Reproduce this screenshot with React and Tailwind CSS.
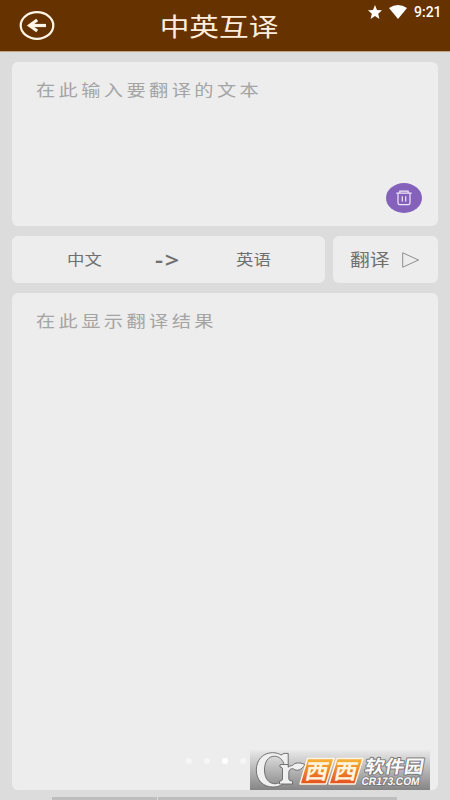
import { clsx } from "clsx";

const sans = "font-['Roboto','Noto_Sans_CJK_SC',sans-serif]";
const card = "rounded-md bg-[#ededed]";

function BackIcon() {
  return (
    <svg width="36" height="30" viewBox="0 0 36 30" fill="none" stroke="#fff6e8">
      <ellipse cx="18" cy="14.5" rx="16.3" ry="13.3" strokeWidth="2.2" />
      <path d="M11 14.5H27" strokeWidth="3.2" />
      <path d="M18.2 9L10.6 14.5L18.2 20" strokeWidth="3.2" />
    </svg>
  );
}

function StatusBar() {
  return (
    <div className="absolute right-2 top-1 flex h-4 items-center text-white">
      <svg width="14" height="14" viewBox="0 0 14 14" fill="currentColor">
        <path d="M7 0L9 4.9L14 5.3L10.2 8.7L11.4 14L7 11.1L2.6 14L3.8 8.7L0 5.3L5 4.9Z" />
      </svg>
      <svg className="ml-[7px] mb-px" width="18" height="14" viewBox="0 0 18 14" fill="currentColor">
        <path d="M0 3Q9 -3 18 3L9 14Z" />
      </svg>
      <span className="ml-[7px] w-7 text-[14px] font-medium leading-4 whitespace-nowrap">9:21</span>
    </div>
  );
}

function Header() {
  return (
    <header className="relative flex h-[52px] shrink-0 items-center justify-center border-b border-[#c2a486] bg-[#663300]">
      <button className="absolute left-[19px] top-[11px]">
        <BackIcon />
      </button>
      <h1 className="mr-3 mt-1.5 scale-x-[1.21] text-[24.5px] leading-none text-[#ffeedd]">中英互译</h1>
      <StatusBar />
    </header>
  );
}

function Hint({ children }) {
  return (
    <p className="origin-left scale-x-[1.2] whitespace-nowrap font-['AR_PL_UKai_CN','KaiTi','Noto_Sans_CJK_SC',serif] text-[16px] leading-6 tracking-[2.85px] text-[#a4a4a4]">
      {children}
    </p>
  );
}

function TrashIcon() {
  return (
    <svg width="16" height="16" viewBox="0 0 16 16" fill="none" stroke="#f0e6fa" strokeWidth="1.2">
      <path d="M0.3 3.2H15.7M3.8 3V1.2H12.2V3M2 3.2V13Q2 14.6 3.6 14.6H12.4Q14 14.6 14 13V3.2M6.3 6.2V11.5M9.7 6.2V11.5" />
    </svg>
  );
}

function Pager() {
  return (
    <div className="absolute left-[174px] top-[465px] flex gap-3">
      {[0, 1, 2, 3].map((i) => (
        <span key={i} className={clsx("size-1.5 rounded-full", i === 2 ? "bg-white" : "bg-[#f6f6f6]")} />
      ))}
    </div>
  );
}

function SiteBadge() {
  return (
    <svg className="absolute left-[238px] top-[457px]" width="180" height="40" viewBox="0 0 180 40">
      <defs>
        <linearGradient id="plate" x1="0" y1="0" x2="0" y2="1">
          <stop offset="0" stopColor="#e9e9e9" />
          <stop offset="1" stopColor="#858585" />
        </linearGradient>
        <linearGradient id="orange" x1="0" y1="0" x2="0" y2="1">
          <stop offset="0.1" stopColor="#f5ad32" />
          <stop offset="0.9" stopColor="#e65822" />
        </linearGradient>
      </defs>
      <rect width="180" height="40" fill="url(#plate)" />
      <g fill="#f0f0f0" stroke="#666" strokeWidth="0.9">
        <path d="M31 5L34 3.4H38.2V15.5H34.4C33 9.5 29 6.2 24.5 6.2C18 6.2 14.5 12 14.5 20C14.5 28.5 19 33.8 25 33.8C28.5 33.8 31 32 33.2 29L36 30.7C33 35 28.5 37 23 37C13 37 6.3 30.2 6.3 20C6.3 10 13 2.7 22.5 2.7C26 2.7 28.8 3.5 31 5Z" />
        <path d="M32 14.5H38.2V17.2C39.5 16 41 15.6 42.5 15.5C45 12.5 49 12 55 14.5C51.5 20 47 21.8 43.2 18.8C40.5 18.2 38.8 20 38.8 23V29Q38.8 31 42.5 31.2V34H29.5V31.2Q32.5 31 32.5 29V19Q32.5 17.2 30 17V14.8Z" />
      </g>
      <g fill="url(#orange)" stroke="#fff4e5" strokeWidth="1.4" strokeLinejoin="round">
        <path d="M57.5 8.5H84L76 34H50Z" />
        <path d="M87 8.5H113L105 34H79Z" />
      </g>
      <g className="font-['Noto_Sans_CJK_SC',sans-serif] text-[21px] font-bold" fill="#fff5df">
        <text transform="translate(54 29) skewX(-12)" textLength="23" lengthAdjust="spacingAndGlyphs">
          西
        </text>
        <text transform="translate(83 29) skewX(-12)" textLength="23" lengthAdjust="spacingAndGlyphs">
          西
        </text>
      </g>
      <g fill="#fafafa" stroke="#777" strokeWidth="1.8" paintOrder="stroke" strokeLinejoin="round">
        <text transform="translate(114 23.2) skewX(-10)" className="font-['Noto_Sans_CJK_SC',sans-serif] text-[18px] font-bold" textLength="59" lengthAdjust="spacingAndGlyphs">
          软件园
        </text>
        <text transform="translate(111 35) skewX(-10)" className="font-['Liberation_Sans',sans-serif] text-[11px] font-bold" textLength="58" lengthAdjust="spacingAndGlyphs">
          CR173.COM
        </text>
      </g>
    </svg>
  );
}

export default function App() {
  return (
    <div className={clsx("flex h-[800px] w-[450px] flex-col overflow-hidden bg-[#dcdcdc]", sans)}>
      <Header />

      <main className="flex flex-col gap-2.5 px-3 pt-2.5">
        {/* source text */}
        <section className={clsx(card, "flex h-[164px] flex-col justify-between pb-[13px] pl-6 pr-4 pt-[15px]")}>
          <Hint>在此输入要翻译的文本</Hint>
          <button className="flex h-[30px] w-9 items-center justify-center self-end rounded-[50%] bg-[#8462bb]">
            <TrashIcon />
          </button>
        </section>

        {/* languages */}
        <section className="flex h-[47px] gap-2">
          <div className={clsx(card, "flex w-[313px] items-center text-[#707070]")}>
            <span className="ml-[55px] mt-[3px] w-[35px] origin-left scale-x-[1.2] text-[14.5px]">中文</span>
            <span className="ml-[53px] mt-[3px] w-[27px] origin-left scale-x-[1.2] whitespace-nowrap font-['Noto_Sans',sans-serif] text-[21px] font-semibold tracking-[1.5px]">-&gt;</span>
            <span className="ml-[54px] mt-[3px] w-[35px] origin-left scale-x-[1.2] text-[14.5px]">英语</span>
          </div>
          <div className={clsx(card, "flex flex-1 items-center text-[#707070]")}>
            <span className="ml-[17px] mt-[3px] w-[40px] origin-left scale-x-[1.2] text-[16.5px]">翻译</span>
            <svg className="ml-3" width="18" height="16" viewBox="0 0 18 16" fill="none" stroke="#858585" strokeWidth="0.9">
              <path d="M0.7 0.8L16.5 8L0.7 15.2Z" />
            </svg>
          </div>
        </section>

        {/* result */}
        <section className={clsx(card, "relative h-[497px] pl-6 pt-[15px]")}>
          <Hint>在此显示翻译结果</Hint>
          <Pager />
          <SiteBadge />
        </section>
      </main>

      <footer className="mt-auto flex h-[3px] shrink-0 gap-px pl-[52px]">
        <div className="w-[105px] bg-[#bebebe]" />
        <div className="w-[239px] bg-[#bebebe]" />
      </footer>
    </div>
  );
}
